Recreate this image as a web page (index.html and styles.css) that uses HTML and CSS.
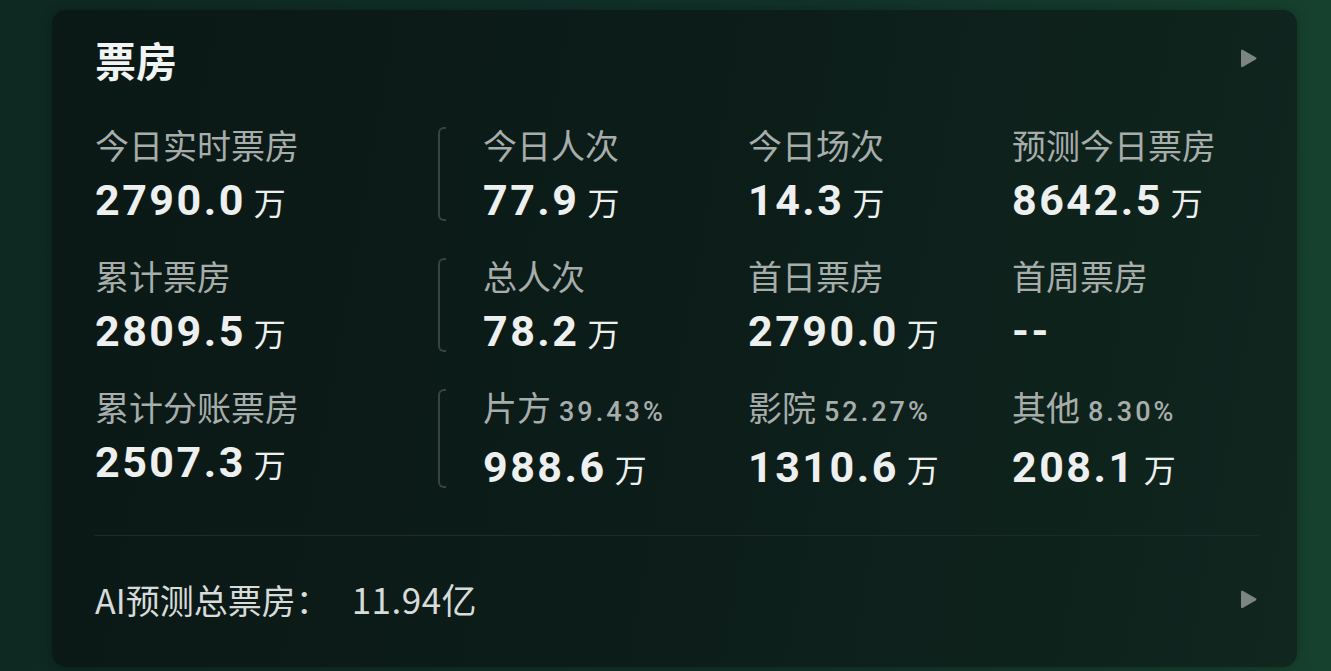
FILE: index.html
```html
<!DOCTYPE html>
<html lang="zh-CN">
<head>
  <meta charset="UTF-8">
  <meta name="viewport" content="width=device-width, initial-scale=1.0">
  <title>票房</title>
  <link rel="stylesheet" href="styles.css">
</head>
<body>
  <div class="card">
    <div class="card-head">
      <h2 class="card-title">票房</h2>
      <svg class="arrow" width="22" height="24" viewBox="0 0 22 24"><path d="M4 4.2 Q4 1.8 6.1 3 L18.6 10.3 Q20.4 11.4 18.6 12.5 L6.1 19.8 Q4 21 4 18.6 Z"/></svg>
    </div>

    <div class="stats">
      <div class="stat">
        <div class="stat-label">今日实时票房</div>
        <div class="stat-value">2790.0<span class="unit">万</span></div>
      </div>
      <div class="stat bracket">
        <div class="stat-label">今日人次</div>
        <div class="stat-value">77.9<span class="unit">万</span></div>
      </div>
      <div class="stat">
        <div class="stat-label">今日场次</div>
        <div class="stat-value">14.3<span class="unit">万</span></div>
      </div>
      <div class="stat">
        <div class="stat-label">预测今日票房</div>
        <div class="stat-value">8642.5<span class="unit">万</span></div>
      </div>

      <div class="stat">
        <div class="stat-label">累计票房</div>
        <div class="stat-value">2809.5<span class="unit">万</span></div>
      </div>
      <div class="stat bracket">
        <div class="stat-label">总人次</div>
        <div class="stat-value">78.2<span class="unit">万</span></div>
      </div>
      <div class="stat">
        <div class="stat-label">首日票房</div>
        <div class="stat-value">2790.0<span class="unit">万</span></div>
      </div>
      <div class="stat">
        <div class="stat-label">首周票房</div>
        <div class="stat-value">--</div>
      </div>

      <div class="stat">
        <div class="stat-label">累计分账票房</div>
        <div class="stat-value">2507.3<span class="unit">万</span></div>
      </div>
      <div class="stat bracket">
        <div class="stat-label">片方<span class="pct">39.43%</span></div>
        <div class="stat-value">988.6<span class="unit">万</span></div>
      </div>
      <div class="stat">
        <div class="stat-label">影院<span class="pct">52.27%</span></div>
        <div class="stat-value">1310.6<span class="unit">万</span></div>
      </div>
      <div class="stat">
        <div class="stat-label">其他<span class="pct">8.30%</span></div>
        <div class="stat-value">208.1<span class="unit">万</span></div>
      </div>
    </div>

    <div class="card-foot">
      <span class="forecast">AI预测总票房：<span class="forecast-num">11.94亿</span></span>
      <svg class="arrow" width="22" height="24" viewBox="0 0 22 24"><path d="M4 4.2 Q4 1.8 6.1 3 L18.6 10.3 Q20.4 11.4 18.6 12.5 L6.1 19.8 Q4 21 4 18.6 Z"/></svg>
    </div>
  </div>
</body>
</html>
```

FILE: styles.css
```css
:root {
  --label-color: #a7adab;
  --value-color: #eef0ef;
  --line-color: #1f2b28;
  --bracket-color: #39433f;
  --arrow-color: #7c8582;

  --cjk-font: "Noto Sans CJK SC", "Noto Sans", sans-serif;
  --num-font: Roboto, "Noto Sans CJK SC", sans-serif;
}

html, body {
  height: 100%;
}

body {
  margin: 0;
  background: linear-gradient(90deg, #0e2822 0%, #11322a 60%, #17412f 100%);
  font-family: var(--cjk-font);
  overflow: hidden;
}

.card {
  box-sizing: border-box;
  width: 1245px;
  height: 657px;
  margin: 10px 0 0 52px;
  padding: 28px 38px 0 43px;
  border-radius: 14px;
  background: linear-gradient(100deg, #0b1916 0%, #0c1c18 45%, #10261f 100%);
  box-shadow: 0 0 12px rgba(0, 0, 0, 0.25);
}

.card-head {
  display: flex;
  justify-content: space-between;
  align-items: center;
  height: 42px;
}

.card-title {
  margin: 0;
  font-size: 41px;
  line-height: 42px;
  font-weight: 700;
  color: #f2f4f3;
}

.arrow {
  fill: var(--arrow-color);
}

/* stat grid */
.stats {
  display: grid;
  grid-template-columns: 388px 265px 264px 1fr;
  row-gap: 30px;
  margin-top: 45px;
}

.stat {
  position: relative;
}

.stat-label {
  font-size: 34px;
  line-height: 40px;
  color: var(--label-color);
  white-space: nowrap;
}

.pct {
  margin-left: 8px;
  font-family: var(--num-font);
  font-size: 27px;
  font-weight: 500;
  letter-spacing: 3px;
}

.stat-value {
  margin-top: 10px;
  font-family: var(--num-font);
  font-size: 43px;
  line-height: 50px;
  font-weight: 700;
  letter-spacing: 2.5px;
  color: var(--value-color);
  white-space: nowrap;
}

.unit {
  margin-left: 8px;
  font-family: var(--cjk-font);
  font-size: 32px;
  font-weight: 400;
  letter-spacing: 0;
}

.bracket::before {
  content: "";
  position: absolute;
  left: -45px;
  top: 2px;
  bottom: 5px;
  width: 6px;
  border: 2px solid var(--bracket-color);
  border-right: none;
  border-radius: 6px 0 0 6px;
}

/* footer */
.card-foot {
  display: flex;
  justify-content: space-between;
  align-items: center;
  margin-top: 42px;
  padding-top: 44px;
  border-top: 1px solid var(--line-color);
}

.forecast {
  font-size: 34px;
  line-height: 38px;
  color: #d7dbda;
}

.forecast-num {
  margin-left: 22px;
  font-size: 35px;
  letter-spacing: 0.5px;
}
```
